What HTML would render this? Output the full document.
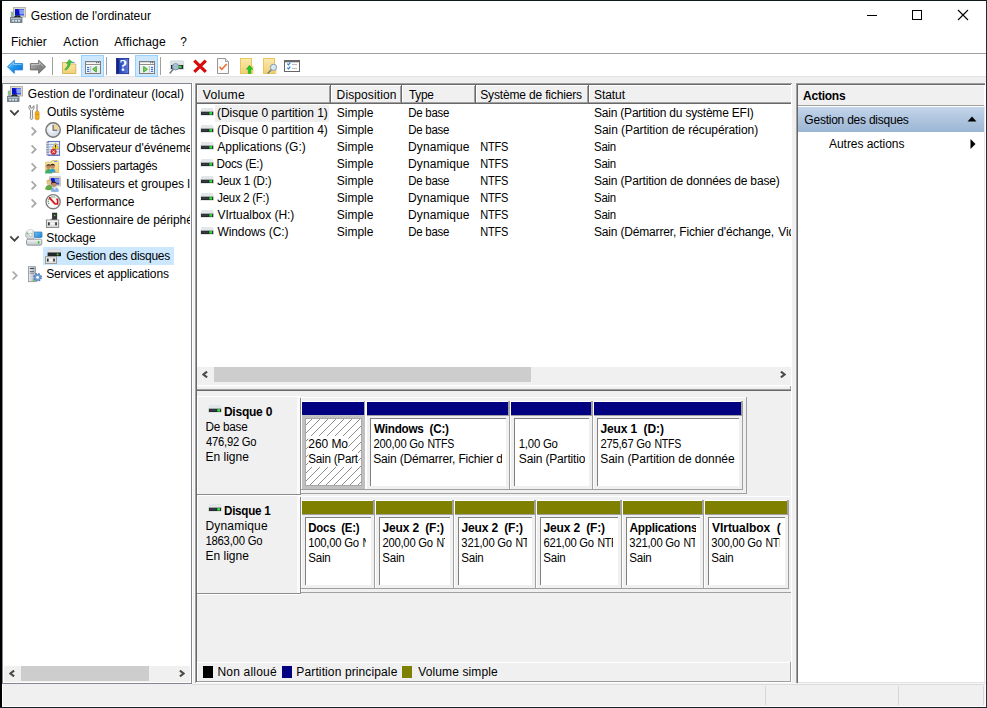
<!DOCTYPE html>
<html lang="fr"><head><meta charset="utf-8"><title>Gestion de l'ordinateur</title>
<style>
html,body{margin:0;padding:0;}
body{width:987px;height:708px;overflow:hidden;position:relative;background:#fff;font-family:"Liberation Sans",sans-serif;font-size:12px;}
div,svg{position:absolute;}
.t{white-space:pre;font-kerning:normal;}
</style></head><body>
<div style="left:0px;top:0px;width:987px;height:708px;background:#fff;"></div>
<div style="left:0px;top:0px;width:2px;height:708px;background:#000;"></div>
<div style="left:0px;top:0px;width:987px;height:1px;background:#11181c;"></div>
<div style="left:986px;top:0px;width:1px;height:708px;background:#1f2d36;"></div>
<div style="left:0px;top:707px;width:987px;height:1px;background:#1c2328;"></div>
<div class="t" id="t1" style="left:31px;top:8.0px;line-height:16px;letter-spacing:-0.012px;transform:translateX(-0.17px);transform-origin:0 0;">Gestion de l'ordinateur</div>
<svg class="a" style="left:860px;top:1px" width="126" height="30" viewBox="0 0 126 30"><rect x="7" y="14" width="10" height="1" fill="#000"/><rect x="52.5" y="9.5" width="9" height="9" fill="none" stroke="#000" stroke-width="1"/><path d="M98 9 L108 19 M108 9 L98 19" stroke="#000" stroke-width="1.1" fill="none"/></svg>
<div class="t" id="t2" style="left:12px;top:34.0px;line-height:16px;letter-spacing:-0.076px;transform:translateX(-0.91px);transform-origin:0 0;">Fichier</div>
<div class="t" id="t3" style="left:63px;top:34.0px;line-height:16px;letter-spacing:0.250px;transform:translateX(0.25px) scaleX(1.0182);transform-origin:0 0;">Action</div>
<div class="t" id="t4" style="left:114px;top:34.0px;line-height:16px;letter-spacing:0.150px;transform:translateX(0.25px) scaleX(1.0087);transform-origin:0 0;">Affichage</div>
<div class="t" id="t5" style="left:181px;top:34.0px;line-height:16px;transform:translateX(-0.65px) scaleX(0.9871);transform-origin:0 0;">?</div>
<div style="left:2px;top:53px;width:984px;height:1px;background:#a0a0a0;"></div>
<div style="left:2px;top:76px;width:984px;height:1px;background:#e3e3e3;"></div>
<div style="left:2px;top:77px;width:984px;height:6px;background:#f0f0f0;"></div>
<div style="left:81px;top:55px;width:23px;height:22px;background:#cce8ff;box-sizing:border-box;border:1px solid #99d1ff;"></div>
<div style="left:135px;top:55px;width:23px;height:22px;background:#cce8ff;box-sizing:border-box;border:1px solid #99d1ff;"></div>
<div style="left:52px;top:57px;width:1px;height:18px;background:#a0a0a0;"></div>
<div style="left:106px;top:57px;width:1px;height:18px;background:#a0a0a0;"></div>
<div style="left:160px;top:57px;width:1px;height:18px;background:#a0a0a0;"></div>
<div style="left:2px;top:83px;width:984px;height:600px;background:#f0f0f0;"></div>
<div style="left:2px;top:83px;width:984px;height:1px;background:#f0f0f0;"></div>
<div style="left:2px;top:83px;width:190px;height:601px;background:#fff;box-sizing:border-box;border:1px solid #828790;"></div>
<div style="left:192px;top:83px;width:1px;height:601px;background:#fff;"></div>
<div style="left:194px;top:83px;width:1px;height:600px;background:#f8f8f8;"></div>
<div class="t" id="t6" style="left:28px;top:86.0px;line-height:16px;letter-spacing:-0.009px;transform:translateX(-0.17px);transform-origin:0 0;">Gestion de l'ordinateur (local)</div>
<div class="t" id="t7" style="left:47px;top:104.0px;line-height:16px;letter-spacing:-0.105px;transform:translateX(0.02px);transform-origin:0 0;">Outils système</div>
<div class="t" id="t8" style="left:66px;top:122.0px;line-height:16px;letter-spacing:-0.100px;transform:translateX(0.03px);transform-origin:0 0;">Planificateur de tâches</div>
<div style="left:64px;top:140.0px;width:126.4px;height:16px;overflow:hidden;"><div class="t" id="t9" style="left:2px;top:0;line-height:16px;letter-spacing:-0.080px;transform:translateX(0.45px);transform-origin:0 0;">Observateur d'événements</div></div>
<div class="t" id="t10" style="left:66px;top:158.0px;line-height:16px;letter-spacing:-0.250px;transform:translateX(0.06px) scaleX(0.9855);transform-origin:0 0;">Dossiers partagés</div>
<div style="left:64px;top:176.0px;width:126.4px;height:16px;overflow:hidden;"><div class="t" id="t11" style="left:2px;top:0;line-height:16px;letter-spacing:-0.069px;transform:translateX(0.17px);transform-origin:0 0;">Utilisateurs et groupes locaux</div></div>
<div class="t" id="t12" style="left:66px;top:194.0px;line-height:16px;letter-spacing:-0.036px;transform:translateX(0.03px);transform-origin:0 0;">Performance</div>
<div style="left:64px;top:212.0px;width:126.4px;height:16px;overflow:hidden;"><div class="t" id="t13" style="left:2px;top:0;line-height:16px;letter-spacing:-0.074px;transform:translateX(0.35px);transform-origin:0 0;">Gestionnaire de périphériques</div></div>
<div class="t" id="t14" style="left:47px;top:230.0px;line-height:16px;letter-spacing:-0.097px;transform:translateX(-0.76px);transform-origin:0 0;">Stockage</div>
<div style="left:43px;top:247px;width:131px;height:18px;background:#cce8ff;"></div>
<div class="t" id="t15" style="left:66px;top:248.0px;line-height:16px;letter-spacing:-0.250px;transform:translateX(0.35px) scaleX(0.9962);transform-origin:0 0;">Gestion des disques</div>
<div class="t" id="t16" style="left:47px;top:266.0px;line-height:16px;letter-spacing:-0.147px;transform:translateX(-0.76px);transform-origin:0 0;">Services et applications</div>
<div style="left:4px;top:666px;width:186px;height:16px;background:#f0f0f0;"></div>
<div style="left:21px;top:666px;width:128px;height:15px;background:#cdcdcd;"></div>
<svg class="a" style="left:9px;top:670px" width="6" height="7" viewBox="0 0 6 7"><path d="M5.100 0.600 L1.300 3.500 L5.100 6.400" stroke="#4a4a4a" stroke-width="2.100" fill="none"/></svg>
<svg class="a" style="left:179px;top:670px" width="6" height="7" viewBox="0 0 6 7"><path d="M0.900 0.600 L4.700 3.500 L0.900 6.400" stroke="#4a4a4a" stroke-width="2.100" fill="none"/></svg>
<div style="left:195px;top:83px;width:597px;height:600px;background:#f0f0f0;"></div>
<div style="left:195px;top:83px;width:597px;height:1px;background:#a0a0a0;"></div>
<div style="left:196px;top:84px;width:595px;height:1px;background:#696969;"></div>
<div style="left:195px;top:83px;width:1px;height:600px;background:#a0a0a0;"></div>
<div style="left:196px;top:84px;width:1px;height:598px;background:#696969;"></div>
<div style="left:791px;top:84px;width:1px;height:599px;background:#fff;"></div>
<div style="left:196px;top:682px;width:596px;height:1px;background:#fff;"></div>
<div style="left:197px;top:85px;width:594px;height:300px;background:#fff;"></div>
<div style="left:197px;top:85px;width:594px;height:19px;background:#f0f0f0;"></div>
<div style="left:197px;top:85px;width:594px;height:1px;background:#fff;"></div>
<div style="left:197px;top:102px;width:594px;height:1px;background:#a0a0a0;"></div>
<div style="left:197px;top:103px;width:594px;height:1px;background:#696969;"></div>
<div style="left:197px;top:85px;width:1px;height:17px;background:#fff;"></div>
<div style="left:329px;top:86px;width:1px;height:17px;background:#a0a0a0;"></div>
<div style="left:330px;top:85px;width:1px;height:18px;background:#696969;"></div>
<div style="left:331px;top:85px;width:1px;height:17px;background:#fff;"></div>
<div style="left:400px;top:86px;width:1px;height:17px;background:#a0a0a0;"></div>
<div style="left:401px;top:85px;width:1px;height:18px;background:#696969;"></div>
<div style="left:402px;top:85px;width:1px;height:17px;background:#fff;"></div>
<div style="left:474px;top:86px;width:1px;height:17px;background:#a0a0a0;"></div>
<div style="left:475px;top:85px;width:1px;height:18px;background:#696969;"></div>
<div style="left:476px;top:85px;width:1px;height:17px;background:#fff;"></div>
<div style="left:587px;top:86px;width:1px;height:17px;background:#a0a0a0;"></div>
<div style="left:588px;top:85px;width:1px;height:18px;background:#696969;"></div>
<div style="left:589px;top:85px;width:1px;height:17px;background:#fff;"></div>
<div class="t" id="t17" style="left:202px;top:86.5px;line-height:16px;letter-spacing:0.250px;transform:translateX(0.79px) scaleX(1.0159);transform-origin:0 0;">Volume</div>
<div class="t" id="t18" style="left:337px;top:86.5px;line-height:16px;letter-spacing:0.114px;transform:translateX(-0.39px);transform-origin:0 0;">Disposition</div>
<div class="t" id="t19" style="left:409px;top:86.5px;line-height:16px;letter-spacing:-0.250px;transform:translateX(0.03px) scaleX(0.9867);transform-origin:0 0;">Type</div>
<div class="t" id="t20" style="left:481px;top:86.5px;line-height:16px;letter-spacing:-0.164px;transform:translateX(-0.76px);transform-origin:0 0;">Système de fichiers</div>
<div class="t" id="t21" style="left:594px;top:86.5px;line-height:16px;letter-spacing:-0.069px;">Statut</div>
<div style="left:215px;top:105px;width:114px;height:17px;background:#efefef;"></div>
<div class="t" id="t22" style="left:217px;top:105.0px;line-height:16px;letter-spacing:-0.026px;transform:translateX(-0.06px);transform-origin:0 0;">(Disque 0 partition 1)</div>
<div class="t" id="t23" style="left:337px;top:105.0px;line-height:16px;letter-spacing:-0.014px;transform:translateX(-0.2px);transform-origin:0 0;">Simple</div>
<div class="t" id="t24" style="left:409px;top:105.0px;line-height:16px;letter-spacing:-0.250px;transform:translateX(-0.85px) scaleX(0.9555);transform-origin:0 0;">De base</div>
<div class="t" id="t25" style="left:594px;top:105.0px;line-height:16px;letter-spacing:-0.210px;">Sain (Partition du système EFI)</div>
<div class="t" id="t26" style="left:217px;top:122.0px;line-height:16px;letter-spacing:-0.026px;transform:translateX(-0.06px);transform-origin:0 0;">(Disque 0 partition 4)</div>
<div class="t" id="t27" style="left:337px;top:122.0px;line-height:16px;letter-spacing:-0.014px;transform:translateX(-0.2px);transform-origin:0 0;">Simple</div>
<div class="t" id="t28" style="left:409px;top:122.0px;line-height:16px;letter-spacing:-0.250px;transform:translateX(-0.85px) scaleX(0.9555);transform-origin:0 0;">De base</div>
<div class="t" id="t29" style="left:594px;top:122.0px;line-height:16px;letter-spacing:-0.061px;">Sain (Partition de récupération)</div>
<div class="t" id="t30" style="left:217px;top:139.0px;line-height:16px;letter-spacing:-0.013px;transform:translateX(0.25px);transform-origin:0 0;">Applications (G:)</div>
<div class="t" id="t31" style="left:337px;top:139.0px;line-height:16px;letter-spacing:-0.014px;transform:translateX(-0.2px);transform-origin:0 0;">Simple</div>
<div class="t" id="t32" style="left:409px;top:139.0px;line-height:16px;letter-spacing:0.080px;transform:translateX(-0.89px);transform-origin:0 0;">Dynamique</div>
<div class="t" id="t33" style="left:481px;top:139.0px;line-height:16px;letter-spacing:-0.250px;transform:translateX(-0.8px) scaleX(0.9176);transform-origin:0 0;">NTFS</div>
<div class="t" id="t34" style="left:594px;top:139.0px;line-height:16px;letter-spacing:-0.250px;transform:translateX(0.08px) scaleX(0.9506);transform-origin:0 0;">Sain</div>
<div class="t" id="t35" style="left:217px;top:156.0px;line-height:16px;letter-spacing:-0.250px;transform:translateX(-0.56px) scaleX(0.9749);transform-origin:0 0;">Docs (E:)</div>
<div class="t" id="t36" style="left:337px;top:156.0px;line-height:16px;letter-spacing:-0.014px;transform:translateX(-0.2px);transform-origin:0 0;">Simple</div>
<div class="t" id="t37" style="left:409px;top:156.0px;line-height:16px;letter-spacing:0.080px;transform:translateX(-0.89px);transform-origin:0 0;">Dynamique</div>
<div class="t" id="t38" style="left:481px;top:156.0px;line-height:16px;letter-spacing:-0.250px;transform:translateX(-0.8px) scaleX(0.9176);transform-origin:0 0;">NTFS</div>
<div class="t" id="t39" style="left:594px;top:156.0px;line-height:16px;letter-spacing:-0.250px;transform:translateX(0.08px) scaleX(0.9506);transform-origin:0 0;">Sain</div>
<div class="t" id="t40" style="left:217px;top:173.0px;line-height:16px;letter-spacing:-0.250px;transform:translateX(0.25px) scaleX(0.9664);transform-origin:0 0;">Jeux 1 (D:)</div>
<div class="t" id="t41" style="left:337px;top:173.0px;line-height:16px;letter-spacing:-0.014px;transform:translateX(-0.2px);transform-origin:0 0;">Simple</div>
<div class="t" id="t42" style="left:409px;top:173.0px;line-height:16px;letter-spacing:-0.250px;transform:translateX(-0.85px) scaleX(0.9555);transform-origin:0 0;">De base</div>
<div class="t" id="t43" style="left:481px;top:173.0px;line-height:16px;letter-spacing:-0.250px;transform:translateX(-0.8px) scaleX(0.9176);transform-origin:0 0;">NTFS</div>
<div class="t" id="t44" style="left:594px;top:173.0px;line-height:16px;letter-spacing:-0.169px;">Sain (Partition de données de base)</div>
<div class="t" id="t45" style="left:217px;top:190.0px;line-height:16px;letter-spacing:-0.250px;transform:translateX(0.27px) scaleX(0.9472);transform-origin:0 0;">Jeux 2 (F:)</div>
<div class="t" id="t46" style="left:337px;top:190.0px;line-height:16px;letter-spacing:-0.014px;transform:translateX(-0.2px);transform-origin:0 0;">Simple</div>
<div class="t" id="t47" style="left:409px;top:190.0px;line-height:16px;letter-spacing:0.080px;transform:translateX(-0.89px);transform-origin:0 0;">Dynamique</div>
<div class="t" id="t48" style="left:481px;top:190.0px;line-height:16px;letter-spacing:-0.250px;transform:translateX(-0.8px) scaleX(0.9176);transform-origin:0 0;">NTFS</div>
<div class="t" id="t49" style="left:594px;top:190.0px;line-height:16px;letter-spacing:-0.250px;transform:translateX(0.08px) scaleX(0.9506);transform-origin:0 0;">Sain</div>
<div class="t" id="t50" style="left:217px;top:207.0px;line-height:16px;letter-spacing:-0.038px;transform:translateX(0.5px);transform-origin:0 0;">VIrtualbox (H:)</div>
<div class="t" id="t51" style="left:337px;top:207.0px;line-height:16px;letter-spacing:-0.014px;transform:translateX(-0.2px);transform-origin:0 0;">Simple</div>
<div class="t" id="t52" style="left:409px;top:207.0px;line-height:16px;letter-spacing:0.080px;transform:translateX(-0.89px);transform-origin:0 0;">Dynamique</div>
<div class="t" id="t53" style="left:481px;top:207.0px;line-height:16px;letter-spacing:-0.250px;transform:translateX(-0.8px) scaleX(0.9176);transform-origin:0 0;">NTFS</div>
<div class="t" id="t54" style="left:594px;top:207.0px;line-height:16px;letter-spacing:-0.250px;transform:translateX(0.08px) scaleX(0.9506);transform-origin:0 0;">Sain</div>
<div class="t" id="t55" style="left:217px;top:224.0px;line-height:16px;letter-spacing:-0.088px;transform:translateX(0.47px);transform-origin:0 0;">Windows (C:)</div>
<div class="t" id="t56" style="left:337px;top:224.0px;line-height:16px;letter-spacing:-0.014px;transform:translateX(-0.2px);transform-origin:0 0;">Simple</div>
<div class="t" id="t57" style="left:409px;top:224.0px;line-height:16px;letter-spacing:-0.250px;transform:translateX(-0.85px) scaleX(0.9555);transform-origin:0 0;">De base</div>
<div class="t" id="t58" style="left:481px;top:224.0px;line-height:16px;letter-spacing:-0.250px;transform:translateX(-0.8px) scaleX(0.9176);transform-origin:0 0;">NTFS</div>
<div class="t" id="t59" style="left:594px;top:224.0px;line-height:16px;letter-spacing:-0.158px;transform:translateX(-0.06px) scaleX(0.9979);transform-origin:0 0;">Sain (Démarrer, Fichier d'échange,</div>
<div style="left:776px;top:224.0px;width:15.0px;height:16px;overflow:hidden;"><div class="t" id="t60" style="left:2px;top:0;line-height:16px;letter-spacing:-0.095px;transform:translateX(0.26px);transform-origin:0 0;">Vidage</div></div>
<div style="left:197px;top:367px;width:594px;height:18px;background:#f0f0f0;"></div>
<div style="left:214px;top:367px;width:317px;height:15px;background:#cdcdcd;"></div>
<svg class="a" style="left:202px;top:371px" width="6" height="7" viewBox="0 0 6 7"><path d="M5.100 0.600 L1.300 3.500 L5.100 6.400" stroke="#4a4a4a" stroke-width="2.100" fill="none"/></svg>
<svg class="a" style="left:780px;top:371px" width="6" height="7" viewBox="0 0 6 7"><path d="M0.900 0.600 L4.700 3.500 L0.900 6.400" stroke="#4a4a4a" stroke-width="2.100" fill="none"/></svg>
<div style="left:197px;top:385px;width:594px;height:1px;background:#fff;"></div>
<div style="left:197px;top:386px;width:594px;height:3px;background:#f0f0f0;"></div>
<div style="left:198px;top:386px;width:593px;height:1px;background:#f5f5f5;"></div>
<div style="left:197px;top:389px;width:594px;height:1px;background:#a0a0a0;"></div>
<div style="left:197px;top:390px;width:594px;height:1px;background:#696969;"></div>
<div style="left:790px;top:386px;width:1px;height:4px;background:#a0a0a0;"></div>
<div style="left:197px;top:396px;width:103px;height:1px;background:#fff;"></div>
<div style="left:197px;top:396px;width:1px;height:98px;background:#fff;"></div>
<div style="left:297px;top:397px;width:3px;height:97px;background:#fafafa;"></div>
<div style="left:300px;top:398px;width:1px;height:96px;background:#8c8c8c;"></div>
<div style="left:197px;top:494px;width:104px;height:1px;background:#8c8c8c;"></div>
<div style="left:197px;top:495px;width:104px;height:1px;background:#fff;"></div>
<div class="t" id="t61" style="left:224px;top:404.0px;line-height:16px;letter-spacing:-0.235px;font-weight:bold;transform:translateX(-0.07px);transform-origin:0 0;">Disque 0</div>
<div class="t" id="t62" style="left:206px;top:419.0px;line-height:16px;letter-spacing:-0.250px;transform:translateX(-0.55px) scaleX(0.9769);transform-origin:0 0;">De base</div>
<div class="t" id="t63" style="left:206px;top:434.0px;line-height:16px;letter-spacing:-0.250px;transform:translateX(0.03px) scaleX(0.9354);transform-origin:0 0;">476,92 Go</div>
<div class="t" id="t64" style="left:206px;top:449.0px;line-height:16px;letter-spacing:0.023px;transform:translateX(-0.59px);transform-origin:0 0;">En ligne</div>
<div style="left:301px;top:397px;width:445px;height:1px;background:#fff;"></div>
<div style="left:301px;top:397px;width:1px;height:96px;background:#fff;"></div>
<div style="left:301px;top:493px;width:446px;height:1px;background:#a0a0a0;"></div>
<div style="left:746px;top:397px;width:1px;height:96px;background:#a0a0a0;"></div>
<div style="left:301px;top:401px;width:65px;height:1px;background:#fff;"></div>
<div style="left:301px;top:401px;width:1px;height:89px;background:#fff;"></div>
<div style="left:302px;top:402px;width:62px;height:13px;background:#000080;"></div>
<div style="left:364px;top:401px;width:1px;height:14px;background:#a0a0a0;"></div>
<div style="left:365px;top:401px;width:2px;height:89px;background:#fff;"></div>
<div style="left:302px;top:415px;width:63px;height:74px;background:#c0c0c0;"></div>
<div style="left:301px;top:489px;width:65px;height:1px;background:#a0a0a0;"></div>
<div style="left:305px;top:418px;width:57px;height:68px;background:#a8a8a8;"></div>
<svg class="a" style="left:306px;top:419px" width="55" height="66" shape-rendering="crispEdges"><defs><pattern id="hat" width="8" height="8" patternUnits="userSpaceOnUse" fill="#8e8e8e"><rect x="5" y="0" width="1" height="1"/><rect x="4" y="1" width="1" height="1"/><rect x="3" y="2" width="1" height="1"/><rect x="2" y="3" width="1" height="1"/><rect x="1" y="4" width="1" height="1"/><rect x="0" y="5" width="1" height="1"/><rect x="7" y="6" width="1" height="1"/><rect x="6" y="7" width="1" height="1"/></pattern></defs><rect width="55" height="66" fill="#fff"/><rect width="55" height="66" fill="url(#hat)"/></svg>
<div style="left:307px;top:435.5px;width:42.0px;height:16px;overflow:hidden;"><div class="t" id="t65" style="left:2px;top:0;line-height:16px;letter-spacing:-0.069px;transform:translateX(-0.65px);transform-origin:0 0;background:#fff;">260 Mo</div></div>
<div style="left:307px;top:450.5px;width:51px;height:16px;overflow:hidden;"><div class="t" id="t66" style="left:2px;top:0;line-height:16px;letter-spacing:-0.250px;transform:translateX(-0.74px) scaleX(0.9747);transform-origin:0 0;background:#fff;">Sain (Part</div></div>
<div style="left:366px;top:401px;width:144px;height:1px;background:#fff;"></div>
<div style="left:366px;top:401px;width:1px;height:89px;background:#fff;"></div>
<div style="left:367px;top:402px;width:141px;height:13px;background:#000080;"></div>
<div style="left:508px;top:401px;width:1px;height:15px;background:#a0a0a0;"></div>
<div style="left:509px;top:401px;width:1px;height:89px;background:#a0a0a0;"></div>
<div style="left:366px;top:489px;width:144px;height:1px;background:#a0a0a0;"></div>
<div style="left:367px;top:415px;width:141px;height:1px;background:#a0a0a0;"></div>
<div style="left:367px;top:416px;width:141px;height:73px;background:#f0f0f0;"></div>
<div style="left:370px;top:418px;width:136px;height:68px;background:#fff;box-sizing:border-box;border-left:1px solid #808080;border-top:1px solid #808080;"></div>
<div style="left:372px;top:420.5px;width:130px;height:16px;overflow:hidden;"><div class="t" id="t67" style="left:2px;top:0;line-height:16px;letter-spacing:-0.250px;font-weight:bold;transform:translateX(0.07px) scaleX(0.9747);transform-origin:0 0;">Windows  (C:)</div></div>
<div style="left:372px;top:435.5px;width:53px;height:16px;overflow:hidden;"><div class="t" id="t68" style="left:2px;top:0;line-height:16px;letter-spacing:-0.250px;transform:translateX(-0.61px) scaleX(0.9386);transform-origin:0 0;">200,00 Go</div></div>
<div style="left:426px;top:435.5px;width:29.8px;height:16px;overflow:hidden;"><div class="t" id="t69" style="left:2px;top:0;line-height:16px;letter-spacing:-0.250px;transform:translateX(-0.55px) scaleX(0.8809);transform-origin:0 0;">NTFS</div></div>
<div style="left:372px;top:450.5px;width:130px;height:16px;overflow:hidden;"><div class="t" id="t70" style="left:2px;top:0;line-height:16px;letter-spacing:-0.180px;transform:translateX(-0.76px);transform-origin:0 0;">Sain (Démarrer, Fichier d</div></div>
<div style="left:510px;top:401px;width:83px;height:1px;background:#fff;"></div>
<div style="left:510px;top:401px;width:1px;height:89px;background:#fff;"></div>
<div style="left:511px;top:402px;width:80px;height:13px;background:#000080;"></div>
<div style="left:591px;top:401px;width:1px;height:15px;background:#a0a0a0;"></div>
<div style="left:592px;top:401px;width:1px;height:89px;background:#a0a0a0;"></div>
<div style="left:510px;top:489px;width:83px;height:1px;background:#a0a0a0;"></div>
<div style="left:511px;top:415px;width:80px;height:1px;background:#a0a0a0;"></div>
<div style="left:511px;top:416px;width:80px;height:73px;background:#f0f0f0;"></div>
<div style="left:514px;top:418px;width:75px;height:68px;background:#fff;box-sizing:border-box;border-left:1px solid #808080;border-top:1px solid #808080;"></div>
<div style="left:517px;top:435.5px;width:68.0px;height:16px;overflow:hidden;"><div class="t" id="t71" style="left:2px;top:0;line-height:16px;letter-spacing:-0.250px;transform:translateX(-0.22px) scaleX(0.9485);transform-origin:0 0;">1,00 Go</div></div>
<div style="left:517px;top:450.5px;width:68.0px;height:16px;overflow:hidden;"><div class="t" id="t72" style="left:2px;top:0;line-height:16px;letter-spacing:-0.155px;transform:translateX(-0.2px);transform-origin:0 0;">Sain (Partitio</div></div>
<div style="left:593px;top:401px;width:150px;height:1px;background:#fff;"></div>
<div style="left:593px;top:401px;width:1px;height:89px;background:#fff;"></div>
<div style="left:594px;top:402px;width:147px;height:13px;background:#000080;"></div>
<div style="left:741px;top:401px;width:1px;height:15px;background:#a0a0a0;"></div>
<div style="left:742px;top:401px;width:1px;height:89px;background:#a0a0a0;"></div>
<div style="left:593px;top:489px;width:150px;height:1px;background:#a0a0a0;"></div>
<div style="left:594px;top:415px;width:147px;height:1px;background:#a0a0a0;"></div>
<div style="left:594px;top:416px;width:147px;height:73px;background:#f0f0f0;"></div>
<div style="left:597px;top:418px;width:142px;height:68px;background:#fff;box-sizing:border-box;border-left:1px solid #808080;border-top:1px solid #808080;"></div>
<div style="left:599px;top:420.5px;width:136px;height:16px;overflow:hidden;"><div class="t" id="t73" style="left:2px;top:0;line-height:16px;letter-spacing:-0.115px;font-weight:bold;transform:translateX(-0.5px);transform-origin:0 0;">Jeux 1  (D:)</div></div>
<div style="left:599px;top:435.5px;width:53px;height:16px;overflow:hidden;"><div class="t" id="t74" style="left:2px;top:0;line-height:16px;letter-spacing:-0.250px;transform:translateX(-0.61px) scaleX(0.9386);transform-origin:0 0;">275,67 Go</div></div>
<div style="left:653px;top:435.5px;width:29.8px;height:16px;overflow:hidden;"><div class="t" id="t75" style="left:2px;top:0;line-height:16px;letter-spacing:-0.250px;transform:translateX(-0.55px) scaleX(0.8809);transform-origin:0 0;">NTFS</div></div>
<div style="left:599px;top:450.5px;width:136px;height:16px;overflow:hidden;"><div class="t" id="t76" style="left:2px;top:0;line-height:16px;letter-spacing:-0.043px;transform:translateX(-0.76px);transform-origin:0 0;">Sain (Partition de donnée</div></div>
<div style="left:197px;top:495px;width:103px;height:1px;background:#fff;"></div>
<div style="left:197px;top:495px;width:1px;height:98px;background:#fff;"></div>
<div style="left:297px;top:496px;width:3px;height:97px;background:#fafafa;"></div>
<div style="left:300px;top:497px;width:1px;height:96px;background:#8c8c8c;"></div>
<div style="left:197px;top:593px;width:104px;height:1px;background:#8c8c8c;"></div>
<div style="left:197px;top:594px;width:104px;height:1px;background:#fff;"></div>
<div class="t" id="t77" style="left:224px;top:503.0px;line-height:16px;letter-spacing:-0.250px;font-weight:bold;transform:translateX(-0.03px) scaleX(0.9697);transform-origin:0 0;">Disque 1</div>
<div class="t" id="t78" style="left:206px;top:518.0px;line-height:16px;letter-spacing:0.192px;transform:translateX(-0.59px);transform-origin:0 0;">Dynamique</div>
<div class="t" id="t79" style="left:206px;top:533.0px;line-height:16px;letter-spacing:-0.250px;transform:translateX(-0.58px) scaleX(0.9442);transform-origin:0 0;">1863,00 Go</div>
<div class="t" id="t80" style="left:206px;top:548.0px;line-height:16px;letter-spacing:0.023px;transform:translateX(-0.59px);transform-origin:0 0;">En ligne</div>
<div style="left:301px;top:496px;width:489px;height:1px;background:#fff;"></div>
<div style="left:301px;top:496px;width:1px;height:96px;background:#fff;"></div>
<div style="left:301px;top:592px;width:490px;height:1px;background:#a0a0a0;"></div>
<div style="left:301px;top:500px;width:74px;height:1px;background:#fff;"></div>
<div style="left:301px;top:500px;width:1px;height:89px;background:#fff;"></div>
<div style="left:302px;top:501px;width:71px;height:13px;background:#808000;"></div>
<div style="left:373px;top:500px;width:1px;height:15px;background:#a0a0a0;"></div>
<div style="left:374px;top:500px;width:1px;height:89px;background:#a0a0a0;"></div>
<div style="left:301px;top:588px;width:74px;height:1px;background:#a0a0a0;"></div>
<div style="left:302px;top:514px;width:71px;height:1px;background:#a0a0a0;"></div>
<div style="left:302px;top:515px;width:71px;height:73px;background:#f0f0f0;"></div>
<div style="left:305px;top:517px;width:66px;height:68px;background:#fff;box-sizing:border-box;border-left:1px solid #808080;border-top:1px solid #808080;"></div>
<div style="left:307px;top:519.5px;width:60px;height:16px;overflow:hidden;"><div class="t" id="t81" style="left:2px;top:0;line-height:16px;letter-spacing:-0.250px;font-weight:bold;transform:translateX(-0.73px) scaleX(0.9532);transform-origin:0 0;">Docs  (E:)</div></div>
<div style="left:307px;top:534.5px;width:53px;height:16px;overflow:hidden;"><div class="t" id="t82" style="left:2px;top:0;line-height:16px;letter-spacing:-0.250px;transform:translateX(-0.8px) scaleX(0.9422);transform-origin:0 0;">100,00 Go</div></div>
<div style="left:361px;top:534.5px;width:4.6px;height:16px;overflow:hidden;"><div class="t" id="t83" style="left:2px;top:0;line-height:16px;letter-spacing:-0.250px;transform:translateX(-0.55px) scaleX(0.8809);transform-origin:0 0;">NTFS</div></div>
<div style="left:307px;top:549.5px;width:60px;height:16px;overflow:hidden;"><div class="t" id="t84" style="left:2px;top:0;line-height:16px;letter-spacing:-0.250px;transform:translateX(-0.73px) scaleX(0.9627);transform-origin:0 0;">Sain</div></div>
<div style="left:375px;top:500px;width:79px;height:1px;background:#fff;"></div>
<div style="left:375px;top:500px;width:1px;height:89px;background:#fff;"></div>
<div style="left:376px;top:501px;width:76px;height:13px;background:#808000;"></div>
<div style="left:452px;top:500px;width:1px;height:15px;background:#a0a0a0;"></div>
<div style="left:453px;top:500px;width:1px;height:89px;background:#a0a0a0;"></div>
<div style="left:375px;top:588px;width:79px;height:1px;background:#a0a0a0;"></div>
<div style="left:376px;top:514px;width:76px;height:1px;background:#a0a0a0;"></div>
<div style="left:376px;top:515px;width:76px;height:73px;background:#f0f0f0;"></div>
<div style="left:379px;top:517px;width:71px;height:68px;background:#fff;box-sizing:border-box;border-left:1px solid #808080;border-top:1px solid #808080;"></div>
<div style="left:381px;top:519.5px;width:65px;height:16px;overflow:hidden;"><div class="t" id="t85" style="left:2px;top:0;line-height:16px;letter-spacing:-0.157px;font-weight:bold;transform:translateX(-0.5px);transform-origin:0 0;">Jeux 2  (F:)</div></div>
<div style="left:381px;top:534.5px;width:53px;height:16px;overflow:hidden;"><div class="t" id="t86" style="left:2px;top:0;line-height:16px;letter-spacing:-0.250px;transform:translateX(-0.61px) scaleX(0.9386);transform-origin:0 0;">200,00 Go</div></div>
<div style="left:435px;top:534.5px;width:9.6px;height:16px;overflow:hidden;"><div class="t" id="t87" style="left:2px;top:0;line-height:16px;letter-spacing:-0.250px;transform:translateX(-0.55px) scaleX(0.8809);transform-origin:0 0;">NTFS</div></div>
<div style="left:381px;top:549.5px;width:65px;height:16px;overflow:hidden;"><div class="t" id="t88" style="left:2px;top:0;line-height:16px;letter-spacing:-0.250px;transform:translateX(-0.73px) scaleX(0.9627);transform-origin:0 0;">Sain</div></div>
<div style="left:454px;top:500px;width:82px;height:1px;background:#fff;"></div>
<div style="left:454px;top:500px;width:1px;height:89px;background:#fff;"></div>
<div style="left:455px;top:501px;width:79px;height:13px;background:#808000;"></div>
<div style="left:534px;top:500px;width:1px;height:15px;background:#a0a0a0;"></div>
<div style="left:535px;top:500px;width:1px;height:89px;background:#a0a0a0;"></div>
<div style="left:454px;top:588px;width:82px;height:1px;background:#a0a0a0;"></div>
<div style="left:455px;top:514px;width:79px;height:1px;background:#a0a0a0;"></div>
<div style="left:455px;top:515px;width:79px;height:73px;background:#f0f0f0;"></div>
<div style="left:458px;top:517px;width:74px;height:68px;background:#fff;box-sizing:border-box;border-left:1px solid #808080;border-top:1px solid #808080;"></div>
<div style="left:460px;top:519.5px;width:68px;height:16px;overflow:hidden;"><div class="t" id="t89" style="left:2px;top:0;line-height:16px;letter-spacing:-0.157px;font-weight:bold;transform:translateX(-0.5px);transform-origin:0 0;">Jeux 2  (F:)</div></div>
<div style="left:460px;top:534.5px;width:53px;height:16px;overflow:hidden;"><div class="t" id="t90" style="left:2px;top:0;line-height:16px;letter-spacing:-0.250px;transform:translateX(-0.64px) scaleX(0.9392);transform-origin:0 0;">321,00 Go</div></div>
<div style="left:514px;top:534.5px;width:12.6px;height:16px;overflow:hidden;"><div class="t" id="t91" style="left:2px;top:0;line-height:16px;letter-spacing:-0.250px;transform:translateX(-0.55px) scaleX(0.8809);transform-origin:0 0;">NTFS</div></div>
<div style="left:460px;top:549.5px;width:68px;height:16px;overflow:hidden;"><div class="t" id="t92" style="left:2px;top:0;line-height:16px;letter-spacing:-0.250px;transform:translateX(-0.73px) scaleX(0.9627);transform-origin:0 0;">Sain</div></div>
<div style="left:536px;top:500px;width:86px;height:1px;background:#fff;"></div>
<div style="left:536px;top:500px;width:1px;height:89px;background:#fff;"></div>
<div style="left:537px;top:501px;width:83px;height:13px;background:#808000;"></div>
<div style="left:620px;top:500px;width:1px;height:15px;background:#a0a0a0;"></div>
<div style="left:621px;top:500px;width:1px;height:89px;background:#a0a0a0;"></div>
<div style="left:536px;top:588px;width:86px;height:1px;background:#a0a0a0;"></div>
<div style="left:537px;top:514px;width:83px;height:1px;background:#a0a0a0;"></div>
<div style="left:537px;top:515px;width:83px;height:73px;background:#f0f0f0;"></div>
<div style="left:540px;top:517px;width:78px;height:68px;background:#fff;box-sizing:border-box;border-left:1px solid #808080;border-top:1px solid #808080;"></div>
<div style="left:542px;top:519.5px;width:72px;height:16px;overflow:hidden;"><div class="t" id="t93" style="left:2px;top:0;line-height:16px;letter-spacing:-0.157px;font-weight:bold;transform:translateX(-0.5px);transform-origin:0 0;">Jeux 2  (F:)</div></div>
<div style="left:542px;top:534.5px;width:53px;height:16px;overflow:hidden;"><div class="t" id="t94" style="left:2px;top:0;line-height:16px;letter-spacing:-0.250px;transform:translateX(-0.6px) scaleX(0.9385);transform-origin:0 0;">621,00 Go</div></div>
<div style="left:596px;top:534.5px;width:16.6px;height:16px;overflow:hidden;"><div class="t" id="t95" style="left:2px;top:0;line-height:16px;letter-spacing:-0.250px;transform:translateX(-0.55px) scaleX(0.8809);transform-origin:0 0;">NTFS</div></div>
<div style="left:542px;top:549.5px;width:72px;height:16px;overflow:hidden;"><div class="t" id="t96" style="left:2px;top:0;line-height:16px;letter-spacing:-0.250px;transform:translateX(-0.73px) scaleX(0.9627);transform-origin:0 0;">Sain</div></div>
<div style="left:622px;top:500px;width:82px;height:1px;background:#fff;"></div>
<div style="left:622px;top:500px;width:1px;height:89px;background:#fff;"></div>
<div style="left:623px;top:501px;width:79px;height:13px;background:#808000;"></div>
<div style="left:702px;top:500px;width:1px;height:15px;background:#a0a0a0;"></div>
<div style="left:703px;top:500px;width:1px;height:89px;background:#a0a0a0;"></div>
<div style="left:622px;top:588px;width:82px;height:1px;background:#a0a0a0;"></div>
<div style="left:623px;top:514px;width:79px;height:1px;background:#a0a0a0;"></div>
<div style="left:623px;top:515px;width:79px;height:73px;background:#f0f0f0;"></div>
<div style="left:626px;top:517px;width:74px;height:68px;background:#fff;box-sizing:border-box;border-left:1px solid #808080;border-top:1px solid #808080;"></div>
<div style="left:628px;top:519.5px;width:68px;height:16px;overflow:hidden;"><div class="t" id="t97" style="left:2px;top:0;line-height:16px;letter-spacing:-0.250px;font-weight:bold;transform:translateX(-0.49px) scaleX(0.9825);transform-origin:0 0;">Applications</div></div>
<div style="left:628px;top:534.5px;width:53px;height:16px;overflow:hidden;"><div class="t" id="t98" style="left:2px;top:0;line-height:16px;letter-spacing:-0.250px;transform:translateX(-0.64px) scaleX(0.9392);transform-origin:0 0;">321,00 Go</div></div>
<div style="left:682px;top:534.5px;width:12.6px;height:16px;overflow:hidden;"><div class="t" id="t99" style="left:2px;top:0;line-height:16px;letter-spacing:-0.250px;transform:translateX(-0.55px) scaleX(0.8809);transform-origin:0 0;">NTFS</div></div>
<div style="left:628px;top:549.5px;width:68px;height:16px;overflow:hidden;"><div class="t" id="t100" style="left:2px;top:0;line-height:16px;letter-spacing:-0.250px;transform:translateX(-0.73px) scaleX(0.9627);transform-origin:0 0;">Sain</div></div>
<div style="left:704px;top:500px;width:85px;height:1px;background:#fff;"></div>
<div style="left:704px;top:500px;width:1px;height:89px;background:#fff;"></div>
<div style="left:705px;top:501px;width:82px;height:13px;background:#808000;"></div>
<div style="left:787px;top:500px;width:1px;height:15px;background:#a0a0a0;"></div>
<div style="left:788px;top:500px;width:1px;height:89px;background:#a0a0a0;"></div>
<div style="left:704px;top:588px;width:85px;height:1px;background:#a0a0a0;"></div>
<div style="left:705px;top:514px;width:82px;height:1px;background:#a0a0a0;"></div>
<div style="left:705px;top:515px;width:82px;height:73px;background:#f0f0f0;"></div>
<div style="left:708px;top:517px;width:77px;height:68px;background:#fff;box-sizing:border-box;border-left:1px solid #808080;border-top:1px solid #808080;"></div>
<div style="left:710px;top:519.5px;width:71px;height:16px;overflow:hidden;"><div class="t" id="t101" style="left:2px;top:0;line-height:16px;letter-spacing:-0.052px;font-weight:bold;transform:translateX(0.04px);transform-origin:0 0;">VIrtualbox  (</div></div>
<div style="left:710px;top:534.5px;width:53px;height:16px;overflow:hidden;"><div class="t" id="t102" style="left:2px;top:0;line-height:16px;letter-spacing:-0.250px;transform:translateX(-0.64px) scaleX(0.9392);transform-origin:0 0;">300,00 Go</div></div>
<div style="left:764px;top:534.5px;width:15.6px;height:16px;overflow:hidden;"><div class="t" id="t103" style="left:2px;top:0;line-height:16px;letter-spacing:-0.250px;transform:translateX(-0.55px) scaleX(0.8809);transform-origin:0 0;">NTFS</div></div>
<div style="left:710px;top:549.5px;width:71px;height:16px;overflow:hidden;"><div class="t" id="t104" style="left:2px;top:0;line-height:16px;letter-spacing:-0.250px;transform:translateX(-0.73px) scaleX(0.9627);transform-origin:0 0;">Sain</div></div>
<div style="left:197px;top:662px;width:594px;height:1px;background:#fff;"></div>
<div style="left:197px;top:662px;width:1px;height:20px;background:#fff;"></div>
<div style="left:197px;top:681px;width:594px;height:1px;background:#a0a0a0;"></div>
<div style="left:790px;top:662px;width:1px;height:20px;background:#a0a0a0;"></div>
<div style="left:203px;top:666px;width:10px;height:12px;background:#000;"></div>
<div class="t" id="t105" style="left:218px;top:663.5px;line-height:16px;letter-spacing:0.192px;transform:translateX(-0.54px);transform-origin:0 0;">Non alloué</div>
<div style="left:282px;top:666px;width:10px;height:12px;background:#000080;"></div>
<div class="t" id="t106" style="left:297px;top:663.5px;line-height:16px;letter-spacing:0.117px;transform:translateX(-0.63px);transform-origin:0 0;">Partition principale</div>
<div style="left:402px;top:666px;width:10px;height:12px;background:#808000;"></div>
<div class="t" id="t107" style="left:418px;top:663.5px;line-height:16px;letter-spacing:0.113px;transform:translateX(0.3px);transform-origin:0 0;">Volume simple</div>
<div style="left:796px;top:83px;width:190px;height:600px;background:#fff;"></div>
<div style="left:796px;top:83px;width:189px;height:1px;background:#a0a0a0;"></div>
<div style="left:797px;top:84px;width:188px;height:1px;background:#696969;"></div>
<div style="left:796px;top:83px;width:1px;height:600px;background:#a0a0a0;"></div>
<div style="left:797px;top:84px;width:1px;height:599px;background:#696969;"></div>
<div style="left:798px;top:682px;width:188px;height:1px;background:#e3e3e3;"></div>
<div style="left:984px;top:106px;width:1px;height:577px;background:#e6e6e6;"></div>
<div style="left:798px;top:85px;width:186px;height:20px;background:#f0f0f0;"></div>
<div style="left:798px;top:85px;width:186px;height:1px;background:#fafafa;"></div>
<div style="left:798px;top:105px;width:186px;height:1px;background:#a0a0a0;"></div>
<div class="t" id="t108" style="left:803px;top:88.0px;line-height:16px;letter-spacing:-0.250px;font-weight:bold;transform:translateX(0.05px);transform-origin:0 0;">Actions</div>
<div class="a" style="left:798px;top:107px;width:186px;height:25px;background:linear-gradient(#c3d5ea,#9bb5d3);"></div>
<div class="t" id="t109" style="left:805px;top:112.0px;line-height:16px;letter-spacing:-0.238px;transform:translateX(-0.63px);transform-origin:0 0;">Gestion des disques</div>
<div class="t" id="t110" style="left:829px;top:136.0px;line-height:16px;letter-spacing:-0.053px;transform:translateX(0.05px);transform-origin:0 0;">Autres actions</div>
<svg class="a" style="left:966px;top:115px" width="12" height="8" viewBox="0 0 12 8"><path d="M1.500 6.500 L6 1.500 L10.500 6.500 Z" fill="#000"/></svg>
<svg class="a" style="left:969px;top:138px" width="8" height="12" viewBox="0 0 8 12"><path d="M1.500 1 L6.500 6 L1.500 11 Z" fill="#000"/></svg>
<div style="left:192px;top:683px;width:794px;height:1px;background:#f6f6f6;"></div>
<div style="left:192px;top:684px;width:794px;height:1px;background:#dcdcdc;"></div>
<div style="left:2px;top:684px;width:190px;height:1px;background:#f0f0f0;"></div>
<div style="left:2px;top:685px;width:984px;height:21px;background:#f0f0f0;"></div>
<div style="left:2px;top:684px;width:1px;height:23px;background:#fff;"></div>
<div style="left:2px;top:706px;width:984px;height:1px;background:#fff;"></div>
<div style="left:985px;top:684px;width:1px;height:23px;background:#fff;"></div>
<div style="left:765px;top:686px;width:1px;height:19px;background:#d7d7d7;"></div>
<div style="left:983px;top:686px;width:1px;height:19px;background:#d7d7d7;"></div>
<div style="left:898px;top:686px;width:1px;height:19px;background:#d7d7d7;"></div>
<svg class="a" style="left:0;top:0" width="987" height="708" viewBox="0 0 987 708"><defs>
<linearGradient id="gb" x1="0" y1="0" x2="1" y2="1"><stop offset="0" stop-color="#7fd0fb"/><stop offset=".5" stop-color="#1f93ea"/><stop offset="1" stop-color="#0a6fd8"/></linearGradient>
<linearGradient id="gg" x1="0" y1="0" x2="1" y2="1"><stop offset="0" stop-color="#c4c4c4"/><stop offset=".5" stop-color="#8a8a8a"/><stop offset="1" stop-color="#707070"/></linearGradient>
<linearGradient id="gh" x1="0" y1="0" x2="1" y2="0"><stop offset="0" stop-color="#1b2f9c"/><stop offset=".25" stop-color="#2a44b4"/><stop offset="1" stop-color="#5c80dc"/></linearGradient>
<linearGradient id="gf" x1="0" y1="0" x2="0" y2="1"><stop offset="0" stop-color="#fbe9ae"/><stop offset="1" stop-color="#f1cf74"/></linearGradient>
<radialGradient id="clk" cx=".4" cy=".4"><stop offset="0" stop-color="#fff"/><stop offset="1" stop-color="#d5dde6"/></radialGradient>
<linearGradient id="gdrv" x1="0" y1="0" x2="0" y2="1"><stop offset="0" stop-color="#f4f5f6"/><stop offset="1" stop-color="#c2c7cb"/></linearGradient>
<linearGradient id="gtow" x1="0" y1="0" x2="1" y2="0"><stop offset="0" stop-color="#eef0f2"/><stop offset="1" stop-color="#a9b1b8"/></linearGradient>
<linearGradient id="gcard" x1="0" y1="0" x2="1" y2="1"><stop offset="0" stop-color="#6cc0f4"/><stop offset="1" stop-color="#1f7fd0"/></linearGradient>
</defs><g transform="translate(10,7)">
<rect x="3.500" y="0.500" width="12" height="9.500" fill="#dcd9cc" stroke="#b4b1a4" stroke-width=".9"/>
<rect x="5" y="2" width="9" height="6.500" fill="#3550e6"/>
<path d="M5 2 L8.300 2 L10 8.500 L5 8.500 Z" fill="#0812c4"/>
<rect x="9.600" y="2.600" width="4.400" height="4.600" fill="#a9b9f6" opacity=".75"/>
<rect x="0.800" y="4.600" width="2.600" height="6" fill="#a3abb1"/>
<rect x="1.100" y="6.300" width="2" height="1.400" fill="#54e63a"/>
<path d="M4.300 10.600 Q7.300 7.400 10.600 10.600" stroke="#1c1c1c" stroke-width="1.500" fill="none"/>
<rect x="0.500" y="10.500" width="11.500" height="5" fill="#7d8e99" stroke="#667680" stroke-width=".8"/>
<rect x="1" y="11.100" width="10.500" height="1" fill="#bcc8cf"/>
<rect x="2.300" y="12.900" width="1.800" height="1.700" fill="#e4eaee"/><rect x="5.200" y="12.900" width="1.800" height="1.700" fill="#e4eaee"/><rect x="8.100" y="12.900" width="1.800" height="1.700" fill="#e4eaee"/>
</g>
<path d="M7.400 66.800 L14.300 60.200 L14.300 63.600 L22.600 63.600 L22.600 69.900 L14.300 69.900 L14.300 73.400 Z" fill="url(#gb)" stroke="#2b86d8" stroke-width=".9" stroke-linejoin="round"/>
<path d="M9.300 66.700 L13.500 62.700 L13.500 64.500 L21.700 64.500" fill="none" stroke="#a8e0fd" stroke-width=".8" opacity=".8"/>
<path d="M45.600 66.800 L38.700 60.200 L38.700 63.600 L30.400 63.600 L30.400 69.900 L38.700 69.900 L38.700 73.400 Z" fill="url(#gg)" stroke="#6a6a6a" stroke-width=".9" stroke-linejoin="round"/>
<path d="M31.300 64.500 L39.500 64.500 L39.500 62.700 L43.700 66.700" fill="none" stroke="#dadada" stroke-width=".8" opacity=".8"/>
<path d="M62.500 62.500 L67.200 62.500 L68.500 64 L75.800 64 L75.800 73.500 L62.500 73.500 Z" fill="url(#gf)" stroke="#d6b058" stroke-width=".9"/>
<rect x="71.500" y="61.800" width="3" height="1.200" fill="#5a9be8"/>
<path d="M64.700 69.300 C66.600 68 67.800 65.800 68 63.200 L66.300 63.600 L69.300 59.600 L72.300 62.300 L70.500 62.700 C70.200 65.800 68.500 68.500 65.800 70.200 Z" fill="#46c23a" stroke="#2c9a24" stroke-width=".5"/>
<g transform="translate(85,61)"><rect x="0.500" y="0.500" width="15" height="12" fill="#fff" stroke="#7d7d7d"/><rect x="1" y="1" width="14" height="1.200" fill="#dcdcdc"/><rect x="11" y="1" width="1.200" height="1.200" fill="#6a6a6a"/><rect x="13" y="1" width="1.200" height="1.200" fill="#6a6a6a"/><rect x="1" y="3" width="14" height="1" fill="#8f8f8f"/><rect x="6" y="5" width="9" height="7" fill="#ececec"/><rect x="5" y="5" width="1" height="7" fill="#c6c6c6"/><rect x="2" y="5.8" width="2.400" height="1.300" fill="#3f7ad0"/><rect x="2" y="7.8" width="2.400" height="1.300" fill="#3f7ad0"/><rect x="2" y="9.8" width="2.400" height="1.300" fill="#3f7ad0"/><path d="M11.300 5.600 L11.300 11 L7.700 8.300 Z" fill="#7fd468" stroke="#2ea31f" stroke-width=".9"/></g>
<g transform="translate(139,61)"><rect x="0.500" y="0.500" width="15" height="12" fill="#fff" stroke="#7d7d7d"/><rect x="1" y="1" width="14" height="1.200" fill="#dcdcdc"/><rect x="11" y="1" width="1.200" height="1.200" fill="#6a6a6a"/><rect x="13" y="1" width="1.200" height="1.200" fill="#6a6a6a"/><rect x="1" y="3" width="14" height="1" fill="#8f8f8f"/><rect x="1" y="5" width="9" height="7" fill="#ececec"/><rect x="10" y="5" width="1" height="7" fill="#c6c6c6"/><rect x="11.800" y="5.8" width="2.400" height="1.300" fill="#3f7ad0"/><rect x="11.800" y="7.8" width="2.400" height="1.300" fill="#3f7ad0"/><rect x="11.800" y="9.8" width="2.400" height="1.300" fill="#3f7ad0"/><path d="M4.700 5.600 L4.700 11 L8.300 8.300 Z" fill="#7fd468" stroke="#2ea31f" stroke-width=".9"/></g>
<rect x="116.400" y="58.400" width="12.300" height="15.300" fill="url(#gh)" stroke="#172a8c" stroke-width=".8"/>
<rect x="116.800" y="58.800" width="2" height="14.500" fill="#14237e"/>
<rect x="170.300" y="60.800" width="13.400" height="4.600" rx="1" fill="#dfe2e4" stroke="#c2c7cb" stroke-width=".5"/>
<rect x="170.300" y="64.800" width="13.400" height="5" fill="#cfd3d6"/>
<rect x="171" y="65" width="12.200" height="3.900" fill="#2a2e32"/>
<rect x="178.800" y="65.700" width="2.700" height="2.400" fill="#35e23a"/>
<circle cx="175.600" cy="66.800" r="3.200" fill="#b8d6ee" fill-opacity=".85" stroke="#7d8d9a" stroke-width="1"/>
<path d="M173.300 69.300 L169.600 73.400" stroke="#6f7d88" stroke-width="1.500"/>
<path d="M194.300 60.700 L205.800 71.800 M205.800 60.700 L194.300 71.800" stroke="#d80a0a" stroke-width="3.200" fill="none"/>
<path d="M217.500 58.500 L225.500 58.500 L228.500 61.500 L228.500 73.500 L217.500 73.500 Z" fill="#fafafa" stroke="#8a8a8a" stroke-width=".9"/>
<path d="M225.500 58.500 L225.500 61.500 L228.500 61.500" fill="#e8e8e8" stroke="#8a8a8a" stroke-width=".8"/>
<path d="M219.500 66.800 L221.800 69.500 L226.700 64" fill="none" stroke="#f0651f" stroke-width="1.400"/>
<rect x="240.500" y="58.500" width="11" height="15" fill="url(#gf)" stroke="#e8c250" stroke-width=".9"/>
<rect x="250.500" y="66.500" width="2.500" height="7" fill="#f6d87c" stroke="#e8c250" stroke-width=".6"/>
<path d="M248.200 73.500 L248.200 69.300 L246.200 69.300 L249.500 65.300 L252.900 69.300 L250.900 69.300 L250.900 73.500 Z" fill="#22c322" stroke="#1c9c1c" stroke-width=".4"/>
<rect x="263.500" y="58.500" width="11" height="15" fill="url(#gf)" stroke="#e8c250" stroke-width=".9"/>
<rect x="273.500" y="66.500" width="2.500" height="7" fill="#f6d87c" stroke="#e8c250" stroke-width=".6"/>
<circle cx="273.500" cy="67.300" r="3.100" fill="#d4e8f6" stroke="#8c9aa6" stroke-width="1"/>
<path d="M271.300 69.800 L267.700 73.600" stroke="#6f7d88" stroke-width="1.500"/>
<rect x="284.500" y="60.500" width="15" height="11" fill="#fff" stroke="#666" stroke-width="1"/>
<rect x="284.500" y="60.500" width="15" height="1.800" fill="#666"/>
<path d="M287.300 63.600 L288.500 64.900 L290.300 62.700 M287.300 67.600 L288.500 68.900 L290.300 66.700" stroke="#1f7fe0" stroke-width="1.200" fill="none"/>
<rect x="292" y="64" width="5" height="1" fill="#bdbdbd"/><rect x="292" y="68" width="5" height="1" fill="#bdbdbd"/>
<g transform="translate(7,86)">
<rect x="3.500" y="0.500" width="12" height="9.500" fill="#dcd9cc" stroke="#b4b1a4" stroke-width=".9"/>
<rect x="5" y="2" width="9" height="6.500" fill="#3550e6"/>
<path d="M5 2 L8.300 2 L10 8.500 L5 8.500 Z" fill="#0812c4"/>
<rect x="9.600" y="2.600" width="4.400" height="4.600" fill="#a9b9f6" opacity=".75"/>
<rect x="0.800" y="4.600" width="2.600" height="6" fill="#a3abb1"/>
<rect x="1.100" y="6.300" width="2" height="1.400" fill="#54e63a"/>
<path d="M4.300 10.600 Q7.300 7.400 10.600 10.600" stroke="#1c1c1c" stroke-width="1.500" fill="none"/>
<rect x="0.500" y="10.500" width="11.500" height="5" fill="#7d8e99" stroke="#667680" stroke-width=".8"/>
<rect x="1" y="11.100" width="10.500" height="1" fill="#bcc8cf"/>
<rect x="2.300" y="12.900" width="1.800" height="1.700" fill="#e4eaee"/><rect x="5.200" y="12.900" width="1.800" height="1.700" fill="#e4eaee"/><rect x="8.100" y="12.900" width="1.800" height="1.700" fill="#e4eaee"/>
</g>
<path d="M10.3 110.4 L14.5 114.7 L18.7 110.4" stroke="#404040" stroke-width="1.700" fill="none"/>
<path d="M29.200 106.200 C28.600 108 29.300 109.700 30.600 110.400 L30.300 118.600 C30.300 119.700 32.700 119.700 32.700 118.600 L32.500 110.400 C33.900 109.600 34.500 107.600 33.800 105.600 L32.300 108 L30.700 108 L30.300 105 Z" fill="#f0f0f0" stroke="#6e6e6e" stroke-width=".8"/>
<rect x="36.400" y="104.300" width="1.300" height="7.500" fill="#8e8e8e"/>
<rect x="35.200" y="111.200" width="3.900" height="8.500" rx="1.500" fill="#f3ae17" stroke="#c98a0c" stroke-width=".6"/>
<rect x="35.200" y="114" width="3.900" height="1" fill="#c98a0c" opacity=".6"/>
<path d="M31.6 127.4 L35.7 131.4 L31.6 135.4" stroke="#a6a6a6" stroke-width="1.700" fill="none"/>
<path d="M31.6 145.4 L35.7 149.4 L31.6 153.4" stroke="#a6a6a6" stroke-width="1.700" fill="none"/>
<path d="M31.6 163.4 L35.7 167.4 L31.6 171.4" stroke="#a6a6a6" stroke-width="1.700" fill="none"/>
<path d="M31.6 181.4 L35.7 185.4 L31.6 189.4" stroke="#a6a6a6" stroke-width="1.700" fill="none"/>
<path d="M31.6 199.4 L35.7 203.4 L31.6 207.4" stroke="#a6a6a6" stroke-width="1.700" fill="none"/>
<circle cx="53.100" cy="130" r="7.200" fill="url(#clk)" stroke="#767676" stroke-width="1.400"/>
<path d="M53.100 130 L53.100 124 A6 6 0 0 1 59.100 130 Z" fill="#f6d492"/>
<path d="M53.100 125 L53.100 130.300 L57.200 130.300" stroke="#4c6076" stroke-width="1.100" fill="none"/>
<rect x="48" y="141.400" width="11.600" height="14" fill="#e6ecfa" stroke="#4a64b4" stroke-width=".9"/>
<rect x="49" y="144" width="9.800" height=".8" fill="#8da2dc"/>
<rect x="49" y="146.5" width="9.800" height=".8" fill="#8da2dc"/>
<rect x="49" y="149" width="9.800" height=".8" fill="#8da2dc"/>
<rect x="49" y="151.5" width="9.800" height=".8" fill="#8da2dc"/>
<rect x="49" y="154" width="9.800" height=".8" fill="#8da2dc"/>
<rect x="46.300" y="141.800" width="2.200" height="13.300" fill="#8d97aa"/>
<rect x="46" y="143" width="2.800" height=".9" fill="#d8dce6"/>
<rect x="46" y="145.5" width="2.800" height=".9" fill="#d8dce6"/>
<rect x="46" y="148" width="2.800" height=".9" fill="#d8dce6"/>
<rect x="46" y="150.5" width="2.800" height=".9" fill="#d8dce6"/>
<rect x="46" y="153" width="2.800" height=".9" fill="#d8dce6"/>
<path d="M55.500 142.700 L58.700 148.800 L52.300 148.800 Z" fill="#f7d223" stroke="#c9a416" stroke-width=".5"/>
<rect x="55.100" y="144.800" width=".9" height="2.300" fill="#222"/><rect x="55.100" y="147.500" width=".9" height=".8" fill="#222"/>
<circle cx="53.600" cy="151.700" r="2.800" fill="#dc2b2b" stroke="#b51c1c" stroke-width=".4"/>
<path d="M52.500 150.600 L54.700 152.800 M54.700 150.600 L52.500 152.800" stroke="#fff" stroke-width=".9"/>
<path d="M52 160.600 L58 160.600 L58.700 162.300 L58.700 172.500 L45.700 172.500 L45.700 162.300 L51 162.300 Z" fill="url(#gf)" stroke="#dcb65c" stroke-width=".8"/>
<rect x="54" y="161" width="3" height="1" fill="#5a9be8"/>
<path d="M45 173.500 Q45.500 169 48.700 169 Q51.700 169 52 173.500 Z" fill="#3fae6a"/>
<path d="M49.500 172.500 Q50 168.600 52.600 168.600 Q55.200 168.600 55.500 172.500 Z" fill="#35a0c8"/>
<circle cx="48.600" cy="166.700" r="2.300" fill="#c48a60"/><path d="M46.300 166.500 A2.300 2.300 0 0 1 50.900 166.500 L49.800 165.600 L47.300 165.600 Z" fill="#2f2618"/>
<circle cx="52.600" cy="166.300" r="2.300" fill="#c48a60"/><path d="M50.300 166.100 A2.300 2.300 0 0 1 54.900 166.100 L53.800 165.200 L51.300 165.200 Z" fill="#2f2618"/>
<rect x="49.400" y="176.800" width="11.200" height="9.200" fill="#d9d6c8" stroke="#bcb9ab" stroke-width=".7"/>
<rect x="50.800" y="178.200" width="8.400" height="6.400" fill="#2e4be2"/>
<path d="M50.800 178.200 L54 178.200 L55.500 184.600 L50.800 184.600 Z" fill="#0a16c6"/>
<rect x="55" y="178.800" width="4" height="4" fill="#a9b9f6" opacity=".7"/>
<path d="M45.200 189.600 Q45.400 185 49 185 Q52.600 185 52.800 189.600 Q49 191 45.200 189.600 Z" fill="#62a844"/>
<circle cx="49" cy="182.400" r="2.500" fill="#e6c08e"/><path d="M46.500 182 A2.500 2.500 0 0 1 51.500 182 L50.300 181 L47.700 181 Z" fill="#d6b054"/>
<path d="M50.800 191.600 Q51 187.300 54.800 187.300 Q58.800 187.300 59 191.600 Q55 193 50.800 191.600 Z" fill="#8ab2e4"/>
<path d="M53.800 187.600 L54.800 190 L55.800 187.600 Z" fill="#fff"/>
<circle cx="54" cy="184.300" r="2.600" fill="#c48a60"/><path d="M51.400 184 A2.600 2.600 0 0 1 56.600 184 L55.400 182.900 L52.600 182.900 Z" fill="#2f2618"/>
<circle cx="53.100" cy="201.700" r="7.100" fill="#fbfbfb" stroke="#808080" stroke-width="1.400"/>
<path d="M48.900 203.800 A4.600 4.600 0 0 1 55.600 197.800" fill="none" stroke="#3c8a5a" stroke-width="1.300" stroke-dasharray="1.100 .9"/>
<path d="M56.300 199.200 L57.600 199.200 L57.600 204 L54.600 204" fill="none" stroke="#d21414" stroke-width="1.600"/>
<path d="M49.200 197.300 L55 203.800" stroke="#e01818" stroke-width="1.900"/>
<rect x="52.300" y="213" width="4.600" height="6.600" fill="#33373b" stroke="#1e2022" stroke-width=".5"/>
<rect x="54" y="214.800" width="1.300" height="1.300" fill="#52e23e"/>
<path d="M50 219.800 L52 218.600 L52 219.800 Z" fill="#6a6a6a"/>
<rect x="46.400" y="220" width="12.300" height="7.400" fill="#dedede" stroke="#7e7e7e" stroke-width=".9"/>
<rect x="47" y="220.500" width="11.200" height="1.400" fill="#f4f4f4"/>
<rect x="48" y="222.300" width="1.700" height="3" fill="#333"/><rect x="55.200" y="222.300" width="1.700" height="3" fill="#333"/>
<rect x="50.500" y="223" width="4" height="1.600" fill="#f6f6f6"/>
<path d="M10.3 236.4 L14.5 240.7 L18.7 236.4" stroke="#404040" stroke-width="1.700" fill="none"/>
<circle cx="30.500" cy="234.700" r="4.900" fill="#d6d9dc" stroke="#9aa0a6" stroke-width=".7"/>
<path d="M30.500 234.700 L27 231.300 A4.900 4.900 0 0 1 33 230.500 Z" fill="#f4f5f6"/>
<circle cx="30.500" cy="234.700" r="1.500" fill="#fff" stroke="#9aa0a6" stroke-width=".5"/>
<rect x="26.800" y="232.800" width="1.300" height="1.300" fill="#4cd43a"/>
<rect x="34.500" y="232" width="7.500" height="5.500" rx=".8" fill="url(#gcard)" stroke="#2a78be" stroke-width=".7"/>
<rect x="26.500" y="239.200" width="15.300" height="6" rx="1.500" fill="url(#gdrv)" stroke="#8a9197" stroke-width=".9"/>
<rect x="37.800" y="241" width="1.600" height="2.800" fill="#3fcf35"/>
<rect x="48" y="249.200" width="12.800" height="3.600" rx=".8" fill="#e2e4e6" stroke="#c4c8cc" stroke-width=".5"/>
<rect x="47.600" y="252.500" width="13.400" height="3.700" fill="#23272a"/>
<rect x="56.800" y="253.600" width="1.700" height="1.600" fill="#45e23c"/>
<rect x="45.400" y="256.700" width="11.200" height="6.700" fill="#e4e4e4" stroke="#8a8a8a" stroke-width=".8"/>
<rect x="47" y="258.600" width="1.600" height="3" fill="#2c2c2c"/><rect x="53.200" y="258.600" width="1.600" height="3" fill="#2c2c2c"/>
<rect x="49.300" y="259.300" width="3.300" height="1.600" fill="#fafafa"/>
<path d="M12.6 271.5 L16.7 275.5 L12.6 279.5" stroke="#a6a6a6" stroke-width="1.700" fill="none"/>
<rect x="28.400" y="266.700" width="7" height="15" fill="url(#gtow)" stroke="#8a9299" stroke-width=".8"/>
<rect x="29.800" y="268" width="4.200" height="1" fill="#3e4852"/><rect x="29.800" y="271.200" width="4.200" height="1" fill="#59636d"/><rect x="29.800" y="273" width="4.200" height=".8" fill="#8a949d"/>
<rect x="32.500" y="279.600" width="2" height="1.200" fill="#52d23e"/>
<circle cx="37.600" cy="277.400" r="3.400" fill="#7ea6d8" stroke="#4f7fc0" stroke-width="2" stroke-dasharray="1.500 1.200"/>
<circle cx="37.600" cy="277.400" r="2.900" fill="#6f9ad2"/>
<circle cx="37.600" cy="277.400" r="1.400" fill="#fff"/>
<g transform="translate(200.3,108)"><path d="M1.300 0.200 L12.300 0.200 L13.500 3.600 L13.500 7.800 L0.100 7.800 L0.100 3.600 Z" fill="#d9dde0"/><path d="M1.300 0.200 L12.300 0.200 L13.300 3.400 L0.300 3.400 Z" fill="#e4e7e9"/><rect x="0.700" y="3.700" width="12.200" height="3.300" fill="#26292c"/><rect x="1.200" y="4.600" width="7" height="1.200" fill="#3c4146"/><rect x="9.100" y="4.100" width="2.700" height="2.500" fill="#2fe43a"/></g>
<g transform="translate(200.3,125)"><path d="M1.300 0.200 L12.300 0.200 L13.500 3.600 L13.500 7.800 L0.100 7.800 L0.100 3.600 Z" fill="#d9dde0"/><path d="M1.300 0.200 L12.300 0.200 L13.300 3.400 L0.300 3.400 Z" fill="#e4e7e9"/><rect x="0.700" y="3.700" width="12.200" height="3.300" fill="#26292c"/><rect x="1.200" y="4.600" width="7" height="1.200" fill="#3c4146"/><rect x="9.100" y="4.100" width="2.700" height="2.500" fill="#2fe43a"/></g>
<g transform="translate(200.3,142)"><path d="M1.300 0.200 L12.300 0.200 L13.500 3.600 L13.500 7.800 L0.100 7.800 L0.100 3.600 Z" fill="#d9dde0"/><path d="M1.300 0.200 L12.300 0.200 L13.300 3.400 L0.300 3.400 Z" fill="#e4e7e9"/><rect x="0.700" y="3.700" width="12.200" height="3.300" fill="#26292c"/><rect x="1.200" y="4.600" width="7" height="1.200" fill="#3c4146"/><rect x="9.100" y="4.100" width="2.700" height="2.500" fill="#2fe43a"/></g>
<g transform="translate(200.3,159)"><path d="M1.300 0.200 L12.300 0.200 L13.500 3.600 L13.500 7.800 L0.100 7.800 L0.100 3.600 Z" fill="#d9dde0"/><path d="M1.300 0.200 L12.300 0.200 L13.300 3.400 L0.300 3.400 Z" fill="#e4e7e9"/><rect x="0.700" y="3.700" width="12.200" height="3.300" fill="#26292c"/><rect x="1.200" y="4.600" width="7" height="1.200" fill="#3c4146"/><rect x="9.100" y="4.100" width="2.700" height="2.500" fill="#2fe43a"/></g>
<g transform="translate(200.3,176)"><path d="M1.300 0.200 L12.300 0.200 L13.500 3.600 L13.500 7.800 L0.100 7.800 L0.100 3.600 Z" fill="#d9dde0"/><path d="M1.300 0.200 L12.300 0.200 L13.300 3.400 L0.300 3.400 Z" fill="#e4e7e9"/><rect x="0.700" y="3.700" width="12.200" height="3.300" fill="#26292c"/><rect x="1.200" y="4.600" width="7" height="1.200" fill="#3c4146"/><rect x="9.100" y="4.100" width="2.700" height="2.500" fill="#2fe43a"/></g>
<g transform="translate(200.3,193)"><path d="M1.300 0.200 L12.300 0.200 L13.500 3.600 L13.500 7.800 L0.100 7.800 L0.100 3.600 Z" fill="#d9dde0"/><path d="M1.300 0.200 L12.300 0.200 L13.300 3.400 L0.300 3.400 Z" fill="#e4e7e9"/><rect x="0.700" y="3.700" width="12.200" height="3.300" fill="#26292c"/><rect x="1.200" y="4.600" width="7" height="1.200" fill="#3c4146"/><rect x="9.100" y="4.100" width="2.700" height="2.500" fill="#2fe43a"/></g>
<g transform="translate(200.3,210)"><path d="M1.300 0.200 L12.300 0.200 L13.500 3.600 L13.500 7.800 L0.100 7.800 L0.100 3.600 Z" fill="#d9dde0"/><path d="M1.300 0.200 L12.300 0.200 L13.300 3.400 L0.300 3.400 Z" fill="#e4e7e9"/><rect x="0.700" y="3.700" width="12.200" height="3.300" fill="#26292c"/><rect x="1.200" y="4.600" width="7" height="1.200" fill="#3c4146"/><rect x="9.100" y="4.100" width="2.700" height="2.500" fill="#2fe43a"/></g>
<g transform="translate(200.3,227)"><path d="M1.300 0.200 L12.300 0.200 L13.500 3.600 L13.500 7.800 L0.100 7.800 L0.100 3.600 Z" fill="#d9dde0"/><path d="M1.300 0.200 L12.300 0.200 L13.300 3.400 L0.300 3.400 Z" fill="#e4e7e9"/><rect x="0.700" y="3.700" width="12.200" height="3.300" fill="#26292c"/><rect x="1.200" y="4.600" width="7" height="1.200" fill="#3c4146"/><rect x="9.100" y="4.100" width="2.700" height="2.500" fill="#2fe43a"/></g>
<g transform="translate(208.2,405)"><path d="M1.300 0.200 L12.300 0.200 L13.500 3.600 L13.500 7.800 L0.100 7.800 L0.100 3.600 Z" fill="#d9dde0"/><path d="M1.300 0.200 L12.300 0.200 L13.300 3.400 L0.300 3.400 Z" fill="#e4e7e9"/><rect x="0.700" y="3.700" width="12.200" height="3.300" fill="#26292c"/><rect x="1.200" y="4.600" width="7" height="1.200" fill="#3c4146"/><rect x="9.100" y="4.100" width="2.700" height="2.500" fill="#2fe43a"/></g>
<g transform="translate(208.2,504)"><path d="M1.300 0.200 L12.300 0.200 L13.500 3.600 L13.500 7.800 L0.100 7.800 L0.100 3.600 Z" fill="#d9dde0"/><path d="M1.300 0.200 L12.300 0.200 L13.300 3.400 L0.300 3.400 Z" fill="#e4e7e9"/><rect x="0.700" y="3.700" width="12.200" height="3.300" fill="#26292c"/><rect x="1.200" y="4.600" width="7" height="1.200" fill="#3c4146"/><rect x="9.100" y="4.100" width="2.700" height="2.500" fill="#2fe43a"/></g></svg>
<div class="t" id="t111" style="left:120px;top:58.3px;line-height:16px;font-size:16px;color:#fff;font-weight:bold;transform:translateX(-0.62px) scaleX(0.9664);transform-origin:0 0;font-family:'Liberation Serif',serif;">?</div>
</body></html>
